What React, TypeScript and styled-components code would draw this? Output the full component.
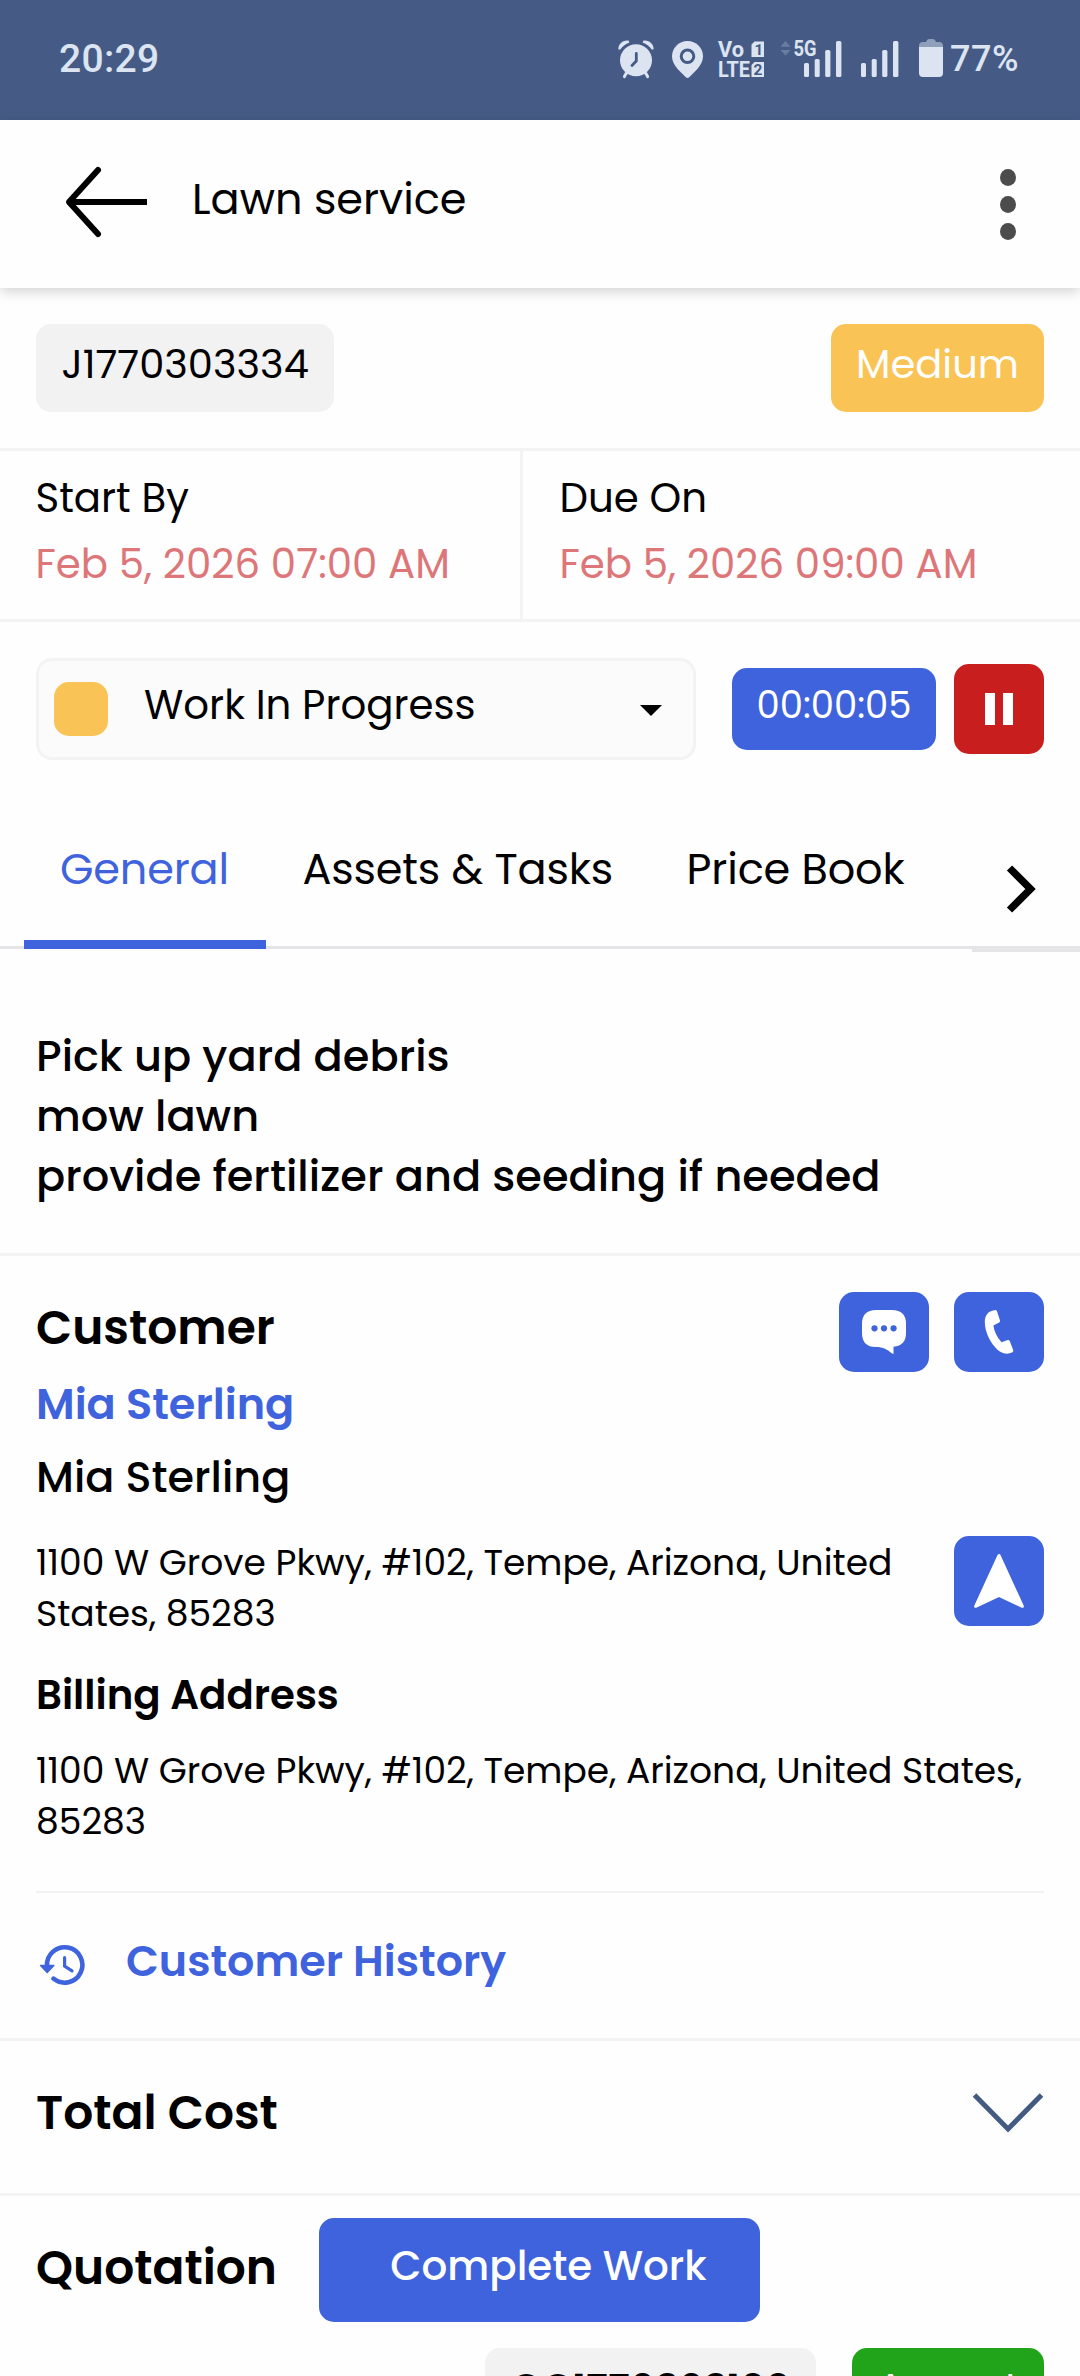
import React from 'react';
import styled, { createGlobalStyle } from 'styled-components';

const c = {
  navy: '#455b85',
  status: '#dce4f2',
  blue: '#3f63dd',
  red: '#c91e1e',
  amber: '#fac355',
  green: '#22a41a',
  overdue: '#dd7679',
  line: '#f3f3f3',
  chip: '#f2f2f2',
  ink: '#000000',
};

const GlobalStyle = createGlobalStyle`
  * { box-sizing: border-box; }
  body { margin: 0; background: #fefefe; }
  h2, h3, p { margin: 0; }
  button { border: 0; padding: 0; font: inherit; color: inherit; }
  svg { display: block; flex: none; }
`;

const Screen = styled.div`
  position: relative;
  width: 1080px;
  height: 2376px;
  overflow: hidden;
  background: #fefefe;
  color: ${c.ink};
  font-family: Poppins, Inter, "Noto Sans", sans-serif;
  font-size: 40.3px;
  line-height: 60px;
`;

/* ---------- status bar ---------- */

const StatusBar = styled.div`
  height: 120px;
  padding: 0 61px 2px 59px;
  display: flex;
  align-items: center;
  background: ${c.navy};
  color: ${c.status};
  font-family: Roboto, sans-serif;
  font-weight: 500;
`;

const Clock = styled.span`
  flex: 1;
  font-size: 39px;
  letter-spacing: 0.3px;
`;

const BatteryLevel = styled.span`
  margin-left: 6px;
  font-size: 36px;
  letter-spacing: 0.5px;
`;

const StatusGlyph = styled.svg<{ $w: number; $gap?: number }>`
  width: ${p => p.$w}px;
  height: 40px;
  margin-left: ${p => p.$gap ?? 0}px;
  overflow: visible;
  fill: ${c.status};
  font-family: Roboto, sans-serif;
  font-weight: 700;
`;

/* ---------- header ---------- */

const Header = styled.header`
  position: relative;
  z-index: 1;
  height: 168px;
  padding: 0 64px;
  display: flex;
  align-items: center;
  background: #fefefe;
  box-shadow: 0 4px 12px rgba(0, 0, 0, 0.17);
`;

const BackIcon = styled.svg`
  width: 84px;
  height: 74px;
  margin-bottom: 4px;
  fill: none;
  stroke: #000;
  stroke-width: 6;
  stroke-linejoin: round;
`;

const Title = styled.div`
  flex: 1;
  margin: 0 0 10px 44px;
  font-size: 43px;
`;

const Kebab = styled.div`
  width: 16px;
  display: flex;
  flex-direction: column;
  gap: 10px;
`;

const Dot = styled.span`
  width: 16px;
  height: 17px;
  border-radius: 50%;
  background: #4c4c4c;
`;

/* ---------- job summary ---------- */

const ChipRow = styled.div<{ $end?: boolean }>`
  display: flex;
  justify-content: ${p => (p.$end ? 'flex-end' : 'space-between')};
  gap: 36px;
`;

const SummaryRow = styled(ChipRow)`
  padding: 36px;
  border-bottom: 3px solid ${c.line};
`;

const Chip = styled.span<{ $bg?: string; $fg?: string }>`
  height: 88px;
  padding: 10px 25px 0 25.5px;
  border-radius: 15px;
  background: ${p => p.$bg ?? c.chip};
  color: ${p => p.$fg ?? c.ink};
  font-size: 40px;
  white-space: nowrap;
`;

const Dates = styled.div`
  display: grid;
  grid-template-columns: 523px 1fr;
  border-bottom: 3px solid ${c.line};
`;

const DateCell = styled.div`
  height: 168px;
  padding: 14px 0 0 36.5px;
  line-height: 66px;
  white-space: nowrap;

  &:first-child {
    padding-left: 35.5px;
    border-right: 3px solid ${c.line};
  }
`;

const DateValue = styled.div`
  color: ${c.overdue};
`;

const WorkRow = styled.div`
  padding: 36px 36px 0;
  display: flex;
  align-items: center;
`;

const Select = styled.div`
  width: 660px;
  height: 102px;
  padding: 0 31px 0 15px;
  display: flex;
  align-items: center;
  border: 3px solid ${c.line};
  border-radius: 16px;
  background: #fbfbfb;
`;

const Swatch = styled.span`
  width: 54px;
  height: 54px;
  border-radius: 15px;
  background: ${c.amber};
`;

const SelectLabel = styled.span`
  flex: 1;
  margin: 0 0 8px 36px;
`;

const Caret = styled.svg`
  width: 22px;
  height: 11px;
  margin-top: 2px;
`;

const Timer = styled.span`
  width: 204px;
  height: 82px;
  margin-left: 36px;
  padding-top: 7px;
  border-radius: 15px;
  background: ${c.blue};
  color: #fff;
  font-size: 37px;
  text-align: center;
`;

const PauseButton = styled.button`
  width: 90px;
  height: 90px;
  margin-left: 18px;
  display: flex;
  align-items: center;
  justify-content: center;
  gap: 8px;
  border-radius: 15px;
  background: ${c.red};
`;

const PauseBar = styled.span`
  width: 10px;
  height: 32px;
  background: #fff;
`;

/* ---------- tabs ---------- */

const TabBar = styled.nav`
  height: 129px;
  margin-top: 60px;
  padding-left: 24px;
  display: flex;
  align-items: flex-start;
  box-shadow: inset 0 -3px #e5e5e7;
`;

const Tab = styled.div<{ $active?: boolean }>`
  height: 129px;
  padding: 19px 37.5px 0 36px;
  border-bottom: 9px solid ${p => (p.$active ? c.blue : 'transparent')};
  color: ${p => (p.$active ? c.blue : c.ink)};
  font-size: 43px;
  letter-spacing: -0.15px;
  white-space: nowrap;
`;

const MoreTabs = styled.div`
  width: 108px;
  height: 132px;
  margin-left: auto;
  padding: 12px 10px 0 0;
  display: flex;
  align-items: center;
  justify-content: center;
  border-bottom: 6px solid #e5e5e7;
`;

/* ---------- general tab ---------- */

const Section = styled.section`
  border-bottom: 3px solid ${c.line};
`;

const Description = styled(Section)`
  padding: 77px 36px 47px;
  font-size: 43.1px;
  font-weight: 500;
`;

const CustomerSection = styled(Section)`
  height: 785px;
  padding: 36px 36px 0;
`;

const CustomerHead = styled.div`
  display: flex;
  justify-content: space-between;
  align-items: flex-start;
`;

const Heading = styled.h2`
  font-size: 47.1px;
  line-height: 71px;
  font-weight: 600;
`;

const CustomerHeading = styled(Heading)`
  margin-bottom: 5px;
`;

const Name = styled.div<{ $link?: boolean }>`
  color: ${p => (p.$link ? c.blue : c.ink)};
  font-size: 43px;
  font-weight: ${p => (p.$link ? 600 : 500)};
  line-height: 73px;
`;

const Actions = styled.div`
  display: flex;
  gap: 25px;
`;

const ActionButton = styled.button<{ $h?: number }>`
  flex: none;
  width: 90px;
  height: ${p => p.$h ?? 80}px;
  border-radius: 15px;
  background: ${c.blue};
  fill: #fff;
`;

const ServiceAddress = styled.div`
  margin-top: 22px;
  display: flex;
  align-items: flex-start;
  gap: 18px;
`;

const Address = styled.p`
  flex: 1;
  padding-top: 2px;
  font-size: 36.05px;
  line-height: 50.5px;
`;

const BillingHeading = styled.h3`
  margin: 26px 0 19px;
  font-size: 40.3px;
  font-weight: 600;
`;

const History = styled.div`
  margin-top: 44px;
  padding-top: 38px;
  display: flex;
  gap: 38px;
  border-top: 2px solid ${c.line};
  color: ${c.blue};
  font-size: 42.8px;
  font-weight: 600;
`;

const HistoryIcon = styled.svg`
  width: 52px;
  height: 48px;
  margin-top: 10px;
  fill: none;
  stroke: ${c.blue};
`;

const TotalCost = styled(Section)`
  height: 155px;
  padding: 0 36px 9px;
  display: flex;
  align-items: center;
  justify-content: space-between;
`;

const Quotation = styled.section`
  padding: 36px 36px 0;
`;

const QuotationHeading = styled(Heading)`
  margin-bottom: 45px;
`;

const CompleteButton = styled.button`
  position: absolute;
  left: 319px;
  bottom: 54px;
  width: 441px;
  height: 104px;
  padding: 0 0 8px 18px;
  border-radius: 15px;
  background: ${c.blue};
  color: #fff;
  font-size: 40.4px;
  font-weight: 500;
`;

function SignalBars({ x }: { x: number }) {
  return (
    <>
      <rect x={x} y="24" width="5" height="14" rx="1.5" />
      <rect x={x + 10.7} y="20" width="5" height="18" rx="1.5" />
      <rect x={x + 21.2} y="11" width="5.2" height="27" rx="1.5" />
      <rect x={x + 32} y="2" width="5.4" height="36" rx="1.5" />
    </>
  );
}

function StatusIcons() {
  return (
    <>
      <StatusGlyph $w={38} viewBox="0 0 38 40">
        <path d="M1.4 10.5C1 5 6 0.6 11.5 1.5L12.4 3.4C8.6 4.8 5 7.4 3.2 10.6Z" />
        <path d="M36.6 10.5C37 5 32 0.6 26.5 1.5L25.6 3.4C29.4 4.8 33 7.4 34.8 10.6Z" />
        <path d="M10 33 7.4 37.6M28 33 30.6 37.6" stroke={c.status} strokeWidth="3" strokeLinecap="round" />
        <circle cx="19" cy="21.2" r="16" />
        <path d="M19.3 14.5V22L15 26.4" fill="none" stroke={c.navy} strokeWidth="2.8" strokeLinecap="round" strokeLinejoin="round" />
      </StatusGlyph>
      <StatusGlyph $w={33} $gap={16} viewBox="0 0 33 40">
        <path d="M16.5 2C8 2 1 8.7 1 17.3c0 5 2.400 9 5.600 12.700l8.200 8.200c1 1 2.400 1 3.400 0l8.200-8.200C29.600 26.300 32 22.300 32 17.300 32 8.700 25 2 16.500 2Z" />
        <circle cx="16.5" cy="17.3" r="6.300" fill={c.status} stroke={c.navy} strokeWidth="3" />
      </StatusGlyph>
      <StatusGlyph $w={48} $gap={13} viewBox="0 0 48 40">
        <text x="1" y="17.5" fontSize="22" textLength="26" lengthAdjust="spacingAndGlyphs">Vo</text>
        <text x="1" y="38" fontSize="22.5" textLength="32" lengthAdjust="spacingAndGlyphs">LTE</text>
        <path d="M37.500 2.500H47V18H34.500V5.500Z M37.500 23H47V38H34.500V26Z" />
        <text x="37.5" y="15.8" fontSize="15" fill={c.navy}>1</text>
        <text x="36.6" y="36.2" fontSize="15.500" fill={c.navy}>2</text>
      </StatusGlyph>
      <StatusGlyph $w={64} $gap={14} viewBox="0 0 64 40">
        <path d="M1.500 7.800 6.500 2 11.500 7.800ZM1.500 11 6.500 16.500 11.500 11Z" opacity="0.25" />
        <text x="14.5" y="17" fontSize="22" textLength="23" lengthAdjust="spacingAndGlyphs">5G</text>
        <SignalBars x={25} />
      </StatusGlyph>
      <StatusGlyph $w={39} $gap={17} viewBox="0 0 39 40">
        <SignalBars x={1} />
      </StatusGlyph>
      <StatusGlyph $w={26} $gap={19} viewBox="0 0 26 40">
        <path d="M1 8V7Q1 3 5 3H8Q9 0 11 0H15Q17 0 18 3H21Q25 3 25 7V8Z" opacity="0.5" />
        <path d="M1 8H25V34Q25 38 21 38H5Q1 38 1 34Z" />
      </StatusGlyph>
      <BatteryLevel>77%</BatteryLevel>
    </>
  );
}

export default function App() {
  return (
    <Screen>
      <GlobalStyle />
      <StatusBar>
        <Clock>20:29</Clock>
        <StatusIcons />
      </StatusBar>

      <Header>
        <BackIcon viewBox="0 0 84 74">
          <path d="M34 5 5 37 34 69" strokeLinecap="round" />
          <path d="M5 37H83" />
        </BackIcon>
        <Title>Lawn service</Title>
        <Kebab>
          <Dot />
          <Dot />
          <Dot />
        </Kebab>
      </Header>

      <SummaryRow>
        <Chip>J1770303334</Chip>
        <Chip $bg={c.amber} $fg="#fff">Medium</Chip>
      </SummaryRow>

      <Dates>
        <DateCell>
          <div>Start By</div>
          <DateValue>Feb 5, 2026 07:00 AM</DateValue>
        </DateCell>
        <DateCell>
          <div>Due On</div>
          <DateValue>Feb 5, 2026 09:00 AM</DateValue>
        </DateCell>
      </Dates>

      <WorkRow>
        <Select>
          <Swatch />
          <SelectLabel>Work In Progress</SelectLabel>
          <Caret viewBox="0 0 22 11">
            <path d="M0 0H22L11 11Z" />
          </Caret>
        </Select>
        <Timer>00:00:05</Timer>
        <PauseButton aria-label="Pause">
          <PauseBar />
          <PauseBar />
        </PauseButton>
      </WorkRow>

      <TabBar>
        <Tab $active>General</Tab>
        <Tab>Assets &amp; Tasks</Tab>
        <Tab>Price Book</Tab>
        <MoreTabs>
          <svg width="32" height="50" viewBox="0 0 32 50" fill="none" stroke="#000" strokeWidth="7.4">
            <path d="M4.5 4 25.5 25 4.5 46" />
          </svg>
        </MoreTabs>
      </TabBar>

      <Description>
        <p>Pick up yard debris</p>
        <p>mow lawn</p>
        <p>provide fertilizer and seeding if needed</p>
      </Description>

      <CustomerSection>
        <CustomerHead>
          <div>
            <CustomerHeading>Customer</CustomerHeading>
            <Name $link>Mia Sterling</Name>
            <Name>Mia Sterling</Name>
          </div>
          <Actions>
            <ActionButton aria-label="Message">
              <svg width="90" height="80" viewBox="0 0 90 80">
                <path d="M37 18H53Q67 18 67 32V41Q67 53.5 54.5 54.8V61Q54.5 62.6 53.2 61.6C48.5 57.5 44 55 37 55Q23 55 23 41V32Q23 18 37 18Z" />
                <g fill={c.blue}>
                  <circle cx="35.5" cy="36.3" r="3.1" />
                  <circle cx="45" cy="36.3" r="3.1" />
                  <circle cx="54.6" cy="36.3" r="3.1" />
                </g>
              </svg>
            </ActionButton>
            <ActionButton aria-label="Call">
              <svg width="90" height="80" viewBox="0 0 90 80">
                <path d="M40.5 18.2C34 19 30.8 23.5 30.8 30C31 40 35.5 48.5 40.5 54.5C45 60.5 52 63.5 58 60.6Q59.8 59.7 59.2 58L55.6 48.8Q55 47.6 53.8 48L47.6 50.2Q43.8 46.5 42 42Q39.8 37.5 39.4 33.6L45.2 30.4Q46.4 29.6 46 28.4L43 19.2Q42.2 17.8 40.5 18.2Z" />
              </svg>
            </ActionButton>
          </Actions>
        </CustomerHead>

        <ServiceAddress>
          <Address>1100 W Grove Pkwy, #102, Tempe, Arizona, United States, 85283</Address>
          <ActionButton $h={90} aria-label="Navigate">
            <svg width="90" height="90" viewBox="0 0 90 90" stroke="#fff" strokeWidth="3" strokeLinejoin="round">
              <path d="M45 19.5 21.6 70.3 45 59.5 68.4 70.3Z" />
            </svg>
          </ActionButton>
        </ServiceAddress>

        <BillingHeading>Billing Address</BillingHeading>
        <Address>1100 W Grove Pkwy, #102, Tempe, Arizona, United States, 85283</Address>

        <History>
          <HistoryIcon viewBox="0 0 52 48">
            <path d="M11 25A17.7 17.7 0 1 1 17.4 37.6" strokeWidth="4.6" strokeLinecap="round" />
            <path d="M4.6 24.5H17.8L11.2 31.5Z" fill={c.blue} strokeWidth="1.5" strokeLinejoin="round" />
            <path d="M28.6 16.5V25.2L36 29.8" strokeWidth="3.2" strokeLinecap="round" />
          </HistoryIcon>
          <span>Customer History</span>
        </History>
      </CustomerSection>

      <TotalCost>
        <Heading>Total Cost</Heading>
        <svg width="72" height="42" viewBox="0 0 72 42" fill="none" stroke="#445a80" strokeWidth="5">
          <path d="M2.5 3 36 37 69.5 3" />
        </svg>
      </TotalCost>

      <Quotation>
        <QuotationHeading>Quotation</QuotationHeading>
        <ChipRow $end>
          <Chip>QO1770303199</Chip>
          <Chip $bg={c.green} $fg="#fff">Accept</Chip>
        </ChipRow>
      </Quotation>

      <CompleteButton>Complete Work</CompleteButton>
    </Screen>
  );
}
